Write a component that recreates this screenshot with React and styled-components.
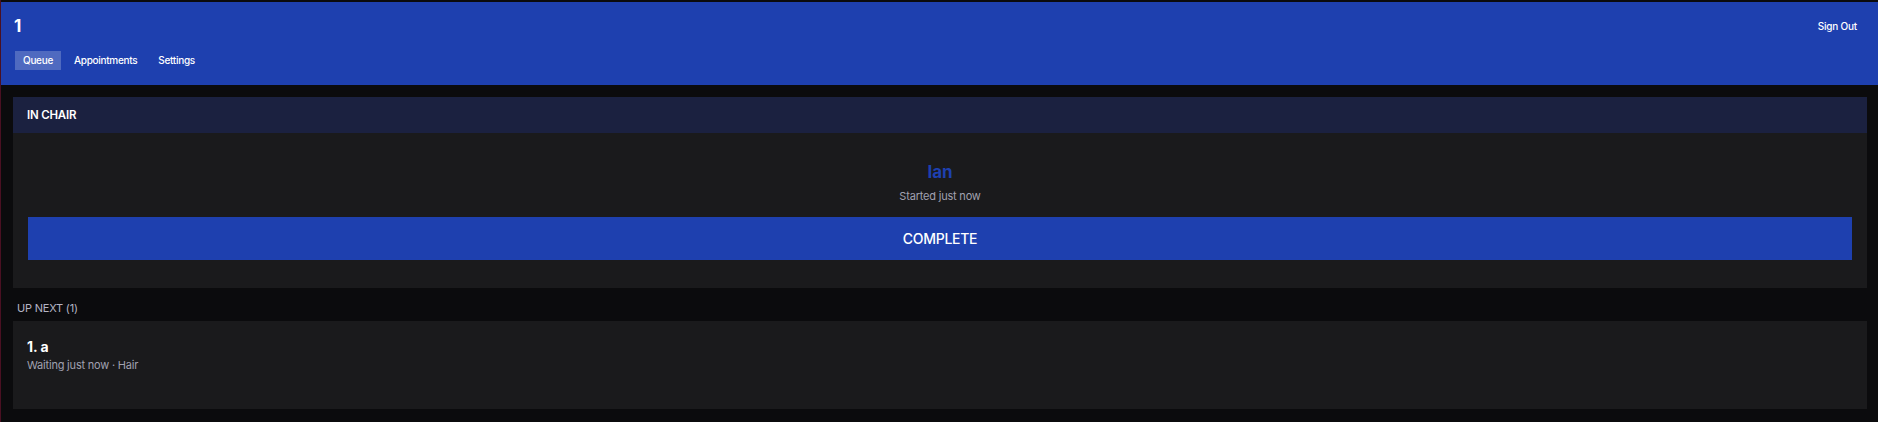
import React from 'react'
import styled, { createGlobalStyle } from 'styled-components'

const GlobalStyle = createGlobalStyle`
  html, body {
    margin: 0;
    padding: 0;
    background: #0b0b0d;
  }
  body {
    font-family: Inter, "Noto Sans", sans-serif;
    color: #ffffff;
  }
`

const Page = styled.div`
  min-height: 422px;
  box-sizing: border-box;
  background: #0b0b0d;
  border-left: 1px solid #4a1022;
  padding-top: 2px;
`

const Header = styled.header`
  background: #1e40af;
  padding: 12px 21px 15px 13px;
`

const TopRow = styled.div`
  display: flex;
  align-items: center;
  justify-content: space-between;
  height: 24px;
`

const ShopName = styled.h1`
  margin: 0;
  font-size: 17px;
  font-weight: 700;
  line-height: 24px;
`

const SignOut = styled.button`
  background: none;
  border: none;
  color: #fff;
  font-family: inherit;
  font-size: 10px;
  font-weight: 500;
  letter-spacing: -0.2px;
  padding: 0;
  cursor: pointer;
`

const Tabs = styled.nav`
  display: flex;
  gap: 5px;
  margin-top: 13px;
  margin-left: 1px;
`

const Tab = styled.button`
  background: ${p => (p.$active ? 'rgba(255, 255, 255, 0.22)' : 'transparent')};
  border: none;
  color: #fff;
  font-family: inherit;
  font-size: 10px;
  font-weight: 500;
  letter-spacing: -0.3px;
  line-height: 13px;
  padding: 3px 8px;
  cursor: pointer;
`

const Main = styled.main`
  padding: 12px 11px 13px 12px;
`

const Panel = styled.section`
  background: #1a1a1c;
`

const PanelHead = styled.div`
  background: #1b2140;
  height: 36px;
  display: flex;
  align-items: center;
  padding: 0 14px;
  font-size: 11.5px;
  font-weight: 600;
  letter-spacing: -0.2px;
`

const PanelBody = styled.div`
  padding: 27px 15px 28px;
  display: flex;
  flex-direction: column;
  align-items: center;
`

const ClientName = styled.div`
  color: #1e40af;
  font-size: 17px;
  font-weight: 700;
  line-height: 24px;
`

const Meta = styled.div`
  color: #a1a1b0;
  font-size: 11px;
  letter-spacing: -0.2px;
  line-height: 16px;
  margin-top: ${p => p.$gap || 0}px;
`

const CompleteButton = styled.button`
  align-self: stretch;
  margin-top: 13px;
  height: 43px;
  background: #1e40af;
  border: none;
  color: #fff;
  font-family: inherit;
  font-size: 14px;
  font-weight: 500;
  letter-spacing: -0.3px;
  cursor: pointer;
`

const SectionLabel = styled.div`
  color: #b4b4c4;
  font-size: 11px;
  letter-spacing: -0.2px;
  line-height: 16px;
  margin: 12px 0 5px 4px;
`

const QueueCard = styled.div`
  background: #1a1a1c;
  padding: 16px 14px 36px;
`

const QueueName = styled.div`
  font-size: 14px;
  font-weight: 700;
  line-height: 20px;
`

export default function App() {
  return (
    <>
      <GlobalStyle />
      <Page>
        <Header>
          <TopRow>
            <ShopName>1</ShopName>
            <SignOut>Sign Out</SignOut>
          </TopRow>
          <Tabs>
            <Tab $active>Queue</Tab>
            <Tab>Appointments</Tab>
            <Tab>Settings</Tab>
          </Tabs>
        </Header>
        <Main>
          <Panel>
            <PanelHead>IN CHAIR</PanelHead>
            <PanelBody>
              <ClientName>Ian</ClientName>
              <Meta $gap={4}>Started just now</Meta>
              <CompleteButton>COMPLETE</CompleteButton>
            </PanelBody>
          </Panel>
          <SectionLabel>UP NEXT (1)</SectionLabel>
          <QueueCard>
            <QueueName>1. a</QueueName>
            <Meta>Waiting just now · Hair</Meta>
          </QueueCard>
        </Main>
      </Page>
    </>
  )
}
